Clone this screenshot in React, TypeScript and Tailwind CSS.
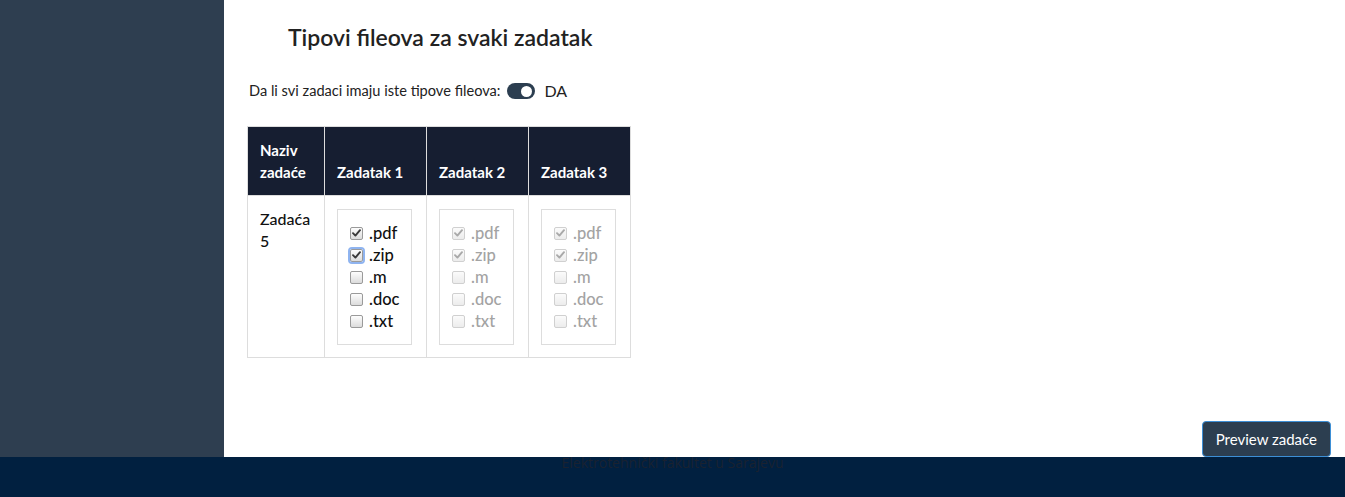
import React from "react";

type CbProps = { checked: boolean; disabled?: boolean; focused?: boolean };

function Cb({ checked, disabled, focused }: CbProps) {
  const border = disabled ? "border-[#d0d0d0]" : "border-[#9a9a9a]";
  const bg = disabled
    ? "bg-gradient-to-b from-[#fbfbfb] to-[#ececec]"
    : "bg-gradient-to-b from-[#fdfdfd] to-[#dcdcdc]";
  const ring = focused ? "outline outline-2 outline-[#8fb4f0] outline-offset-0" : "";
  return (
    <span
      className={`relative inline-flex h-[13px] w-[13px] shrink-0 items-center justify-center rounded-[2px] border ${border} ${bg} ${ring}`}
    >
      {checked && (
        <svg width="9" height="8" viewBox="0 0 9 8" className="block">
          <path
            d="M1 4.2 L3.4 6.6 L8 1.2"
            fill="none"
            stroke={disabled ? "#a9a9a9" : "#3a3a3a"}
            strokeWidth="1.9"
            strokeLinecap="round"
            strokeLinejoin="round"
          />
        </svg>
      )}
    </span>
  );
}

const types = [".pdf", ".zip", ".m", ".doc", ".txt"];

function TypeBox({ disabled }: { disabled?: boolean }) {
  return (
    <div className="mt-px inline-block border border-[#dddddd] p-3">
      {types.map((t, i) => (
        <div key={t} className="flex h-[22px] items-center gap-[6px]">
          <Cb checked={i < 2} disabled={disabled} focused={!disabled && i === 1} />
          <span
            className={`text-[16.5px] font-medium leading-[22px] ${
              disabled ? "text-[#a3a3a3]" : "text-[#111111]"
            }`}
          >
            {t}
          </span>
        </div>
      ))}
    </div>
  );
}

export default function App() {
  return (
    <div
      className="flex h-[497px] w-full flex-col overflow-hidden bg-white"
      style={{ fontFamily: "Lato, 'Open Sans', sans-serif" }}
    >
      <div className="flex h-[457px] shrink-0">
        <aside className="w-[224px] shrink-0 bg-[#2e3e50]" />
        <main className="flex flex-1 flex-col pl-[23px]">
          <h2 className="ml-[41px] mt-[22px] text-[23px] font-semibold leading-[30px] text-[#222222]">
            Tipovi fileova za svaki zadatak
          </h2>
          <div className="mt-[28px] flex items-center pl-[2px] text-[14.6px] text-[#222222]">
            <span className="leading-[22px]">Da li svi zadaci imaju iste tipove fileova:</span>
            <span className="ml-[7px] inline-flex h-[16px] w-[28px] items-center justify-end rounded-full bg-[#2c3e50] pr-[3px]">
              <span className="h-[11px] w-[11px] rounded-full bg-white" />
            </span>
            <span className="ml-[9px] text-[16px] leading-[22px]">DA</span>
          </div>
          <table className="mt-[24px] w-[384px] border-collapse border border-[#dddddd] text-left">
            <thead>
              <tr className="bg-[#161e31] text-white">
                <th className="w-[77px] border border-[#dddddd] px-3 py-3 align-bottom text-[15px] font-bold leading-[22px]">
                  Naziv zadaće
                </th>
                <th className="border border-[#dddddd] px-3 py-3 align-bottom text-[15px] font-bold leading-[22px]">
                  Zadatak 1
                </th>
                <th className="border border-[#dddddd] px-3 py-3 align-bottom text-[15px] font-bold leading-[22px]">
                  Zadatak 2
                </th>
                <th className="border border-[#dddddd] px-3 py-3 align-bottom text-[15px] font-bold leading-[22px]">
                  Zadatak 3
                </th>
              </tr>
            </thead>
            <tbody>
              <tr>
                <td className="border border-[#dddddd] px-3 py-3 align-top text-[16px] font-medium leading-[22px] text-[#111111]">
                  Zadaća 5
                </td>
                <td className="border border-[#dddddd] p-3 align-top">
                  <TypeBox />
                </td>
                <td className="border border-[#dddddd] p-3 align-top">
                  <TypeBox disabled />
                </td>
                <td className="border border-[#dddddd] p-3 align-top">
                  <TypeBox disabled />
                </td>
              </tr>
            </tbody>
          </table>
          <div className="mt-auto flex justify-end pr-[14px]">
            <button className="h-[36px] rounded-[4px] border border-[#3d8fd6] bg-[#2c3e50] px-[13px] text-[15px] text-white">
              Preview zadaće
            </button>
          </div>
        </main>
      </div>
      <footer className="relative h-[40px] shrink-0 bg-[#012040]">
        <div
          className="absolute left-0 right-0 top-[-5px] text-center text-[14px] leading-[22px] text-[#1a2230]"
          style={{ fontFamily: "'Open Sans', sans-serif" }}
        >
          Elektrotehnički fakultet u Sarajevu
        </div>
      </footer>
    </div>
  );
}
